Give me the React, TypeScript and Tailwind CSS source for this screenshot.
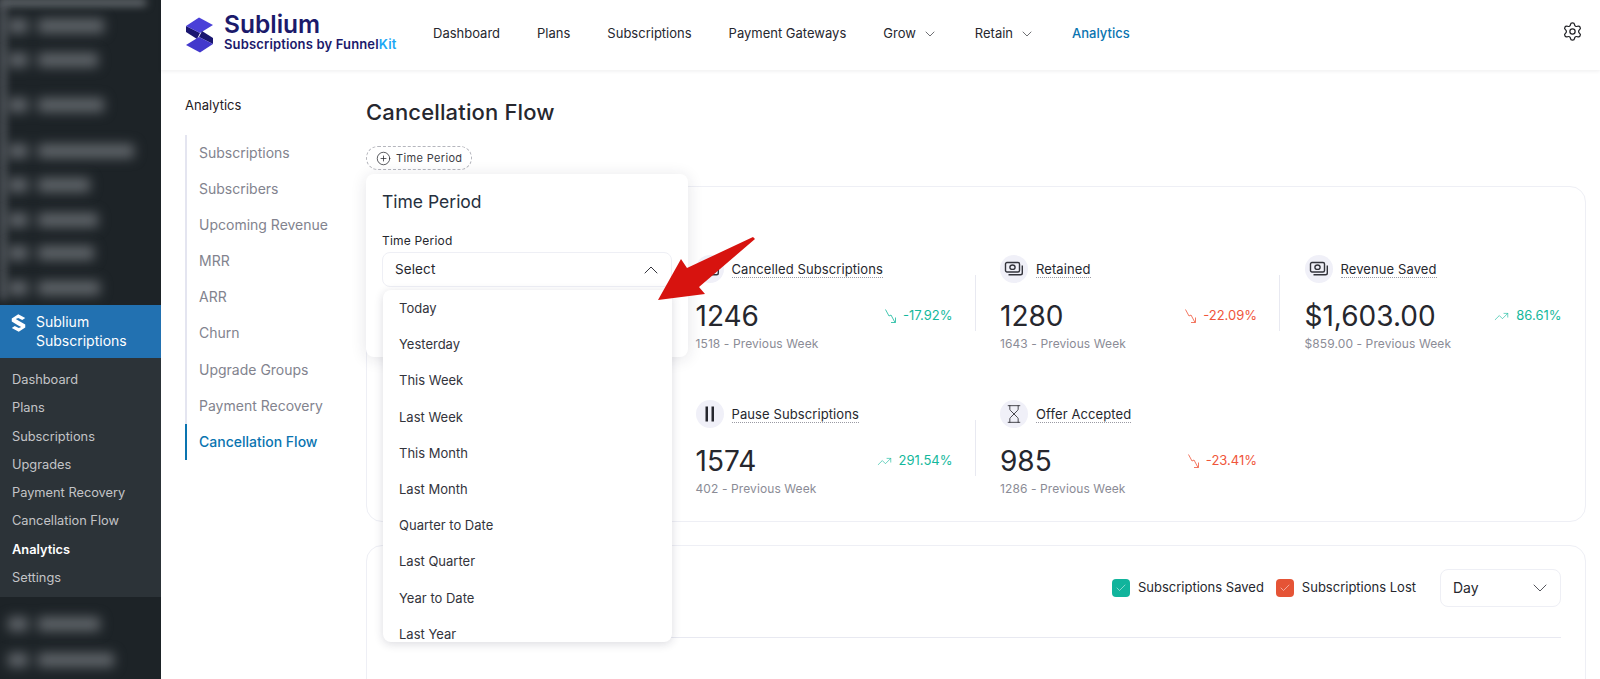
import { Check, ChevronDown, ChevronUp, CirclePlus, Hourglass, Settings, TrendingUp } from "lucide-react";

const font = "font-['Inter','Noto_Sans',sans-serif]";

const wpBlurred = [26, 60, 105, 151, 185, 220, 253, 288];
const wpSub = ["Dashboard", "Plans", "Subscriptions", "Upgrades", "Payment Recovery", "Cancellation Flow", "Analytics", "Settings"];
const navItems = ["Subscriptions", "Subscribers", "Upcoming Revenue", "MRR", "ARR", "Churn", "Upgrade Groups", "Payment Recovery"];
const periods = ["Today", "Yesterday", "This Week", "Last Week", "This Month", "Last Month", "Quarter to Date", "Last Quarter", "Year to Date", "Last Year"];

const CashIcon = () => (
  <svg width="20" height="16" viewBox="0 0 20 16" fill="none" stroke="#33343c" strokeWidth="1.4">
    <rect x="1.500" y="1.500" width="14" height="9.500" rx="1.500" />
    <ellipse cx="8.500" cy="6.200" rx="2.600" ry="2.200" />
    <path d="M18.300 4.500v7.500a1.800 1.800 0 0 1-1.800 1.800H4.500" />
  </svg>
);

const PauseIcon = () => (
  <svg width="12" height="16" viewBox="0 0 12 16" fill="#26272e">
    <rect x="1.500" y="0.500" width="2.500" height="15" />
    <rect x="7.500" y="0.500" width="2.500" height="15" />
  </svg>
);

const ZigDown = () => (
  <svg width="11" height="15" viewBox="0 0 11 15" fill="none" stroke="currentColor" strokeWidth="0.800">
    <path d="M0.500 0.500l3.500 6.500 2-1 4 7.500M10.500 8.500v5H6" />
  </svg>
);

const Logo = () => (
  <svg width="29" height="36" viewBox="0 0 29 36">
    <polygon points="1,9 15,16 12,22 1,15" fill="#1a1670" />
    <polygon points="14,0.500 28,8 15,16 1,9" fill="#4a40d8" />
    <polygon points="28,27 14,20 17,14 28,21" fill="#1a1670" />
    <polygon points="15,35.500 1,28 14,20 28,27" fill="#4238cc" />
  </svg>
);

const Stat = ({ icon, label, value, prev, change, down, good, divider = true }: { icon: React.ReactNode; label: string; value: string; prev: string; change: string; down?: boolean; good?: boolean; divider?: boolean }) => (
  <div className="flex">
    <div className="w-[257px]">
      <div className="flex items-center gap-2 h-7">
        <span className="w-7 h-7 rounded-full bg-[#f0f0f8] flex items-center justify-center">{icon}</span>
        <span className="text-[13px] leading-4 tracking-[0.1px] text-[#26272e] border-b border-dotted border-[#9a9aa3]">{label}</span>
      </div>
      <div className="flex items-center justify-between mt-[16px]">
        <span className="text-[28px] leading-[34px] text-[#26272e]">{value}</span>
        <span className={`flex items-center gap-[7px] text-[13px] ${good ? "text-[#14b89c]" : "text-[#f0553a]"}`}>
          {down ? <ZigDown /> : <TrendingUp size={15} strokeWidth={1} />}
          {change}
        </span>
      </div>
      <div className="text-xs leading-4 tracking-[0.1px] text-[#8b8c96] mt-[3px]">{prev}</div>
    </div>
    {divider && <div className="ml-[22px] mt-5 w-px h-14 bg-[#e8e9f1]" />}
  </div>
);

export default function App() {
  return (
    <div className={`${font} relative flex h-[679px] overflow-hidden bg-white`}>
      {/* WP sidebar */}
      <aside className="w-[161px] shrink-0 bg-[#1d2327] flex flex-col">
        <div className="relative h-[305px] shrink-0 overflow-hidden">
          <div className="absolute left-0 top-0 w-[146px] h-[5px] bg-[#8a8f94] blur-[4px]" />
          <div className="absolute left-0 top-0 w-[6px] h-[300px] bg-[#5c6166] blur-[4px]" />
          {wpBlurred.map((y, i) => (
            <div key={y} className="absolute flex items-center gap-2.5 left-2 blur-[6px]" style={{ top: y - 7 }}>
              <span className="w-5 h-3.5 bg-[#60656a]" />
              <span className="h-3.5 bg-[#60656a]" style={{ width: [66, 60, 66, 96, 52, 60, 56, 62][i] }} />
            </div>
          ))}
        </div>
        <div className="h-[53px] shrink-0 bg-[#2271b1] flex gap-[10px] pl-[11px] pt-[7px] text-[14px] leading-[19px] text-white">
          <svg width="15" height="18" viewBox="0 0 29 36" fill="white" className="mt-0.5 shrink-0">
            <polygon points="14,0.500 28,8 22,12 14,8 9,10 14,13 28,21 28,27 15,35.500 1,28 7,24 15,28 20,26 14,23 1,15 1,9" />
          </svg>
          <span>Sublium<br />Subscriptions</span>
        </div>
        <div className="bg-[#2c3338] h-[239px] shrink-0 pl-3 pt-2 text-[12.800px] text-[#c3c4c7]">
          {wpSub.map((s) => (
            <div key={s} className={`h-[28.3px] leading-[28.3px] ${s === "Analytics" ? "text-white font-semibold" : ""}`}>{s}</div>
          ))}
        </div>
        <div className="relative flex-1">
          {[624, 660].map((y, i) => (
            <div key={y} className="absolute flex items-center gap-2.5 left-2 blur-[6px]" style={{ top: y - 604 }}>
              <span className="w-5 h-3.5 bg-[#60656a]" />
              <span className="h-3.5 bg-[#60656a]" style={{ width: [62, 76][i] }} />
            </div>
          ))}
        </div>
      </aside>

      <div className="flex-1 min-w-0 flex flex-col">
        {/* top bar */}
        <header className="h-[70px] shrink-0 flex items-center pl-[24px] pr-[17px] bg-white shadow-[0_1px_4px_rgba(20,20,40,0.08)] relative z-10">
          <Logo />
          <div className="ml-[10px] w-[209px] mt-[-8px]">
            <div className="text-[24.500px] leading-[25px] font-semibold text-[#1b1a6b]">Sublium</div>
            <div className="text-[13px] leading-[14px] font-semibold text-[#1b1a6b] tracking-[0.15px]">
              Subscriptions by Funnel<span className="text-[#1aa7f5]">Kit</span>
            </div>
          </div>
          <nav className="flex items-center gap-[37px] mt-[-3px] text-[13px] text-[#26272e]">
            <span>Dashboard</span>
            <span>Plans</span>
            <span>Subscriptions</span>
            <span>Payment Gateways</span>
            <span className="flex items-center gap-[6px]">Grow <ChevronDown size={16} strokeWidth={1} /></span>
            <span className="flex items-center gap-[6px]">Retain <ChevronDown size={16} strokeWidth={1} /></span>
            <span className="text-[#0a74b0] font-medium">Analytics</span>
          </nav>
          <Settings size={21} strokeWidth={1.4} className="ml-auto mt-[-8px] text-[#1f2024]" />
        </header>

        <div className="flex-1 flex min-h-0">
          {/* analytics sub nav */}
          <div className="w-[205px] shrink-0 pl-6 pt-[27px]">
            <div className="text-[13px] leading-4 text-[#1f2024]">Analytics</div>
            <div className="mt-[22px] border-l-2 border-[#e4e5f0]">
              {navItems.map((n) => (
                <div key={n} className="h-[36.1px] leading-[36.1px] pl-3 text-sm text-[#82838e]">{n}</div>
              ))}
              <div className="h-[36.1px] leading-[36.1px] pl-3 text-sm text-[#0a74b0] font-medium border-l-2 border-[#0a74b0] -ml-0.5">Cancellation Flow</div>
            </div>
          </div>

          {/* main */}
          <main className="relative flex-1 min-w-0 pr-[14px] pt-[29px]">
            <h1 className="text-[22px] leading-[26px] tracking-[0.15px] font-medium text-[#26272e]">Cancellation Flow</h1>
            <div className="mt-[21px] w-[106px] h-6 flex items-center gap-[5px] pl-[9px] rounded-full border border-dashed border-[#b5b6bd] text-[11px] tracking-[0.35px] text-[#3c3d45]">
              <CirclePlus size={15} strokeWidth={1.2} className="text-[#26272e]" />
              Time Period
            </div>

            {/* stats card */}
            <section className="mt-[16px] h-[336px] rounded-2xl border border-[#eeeff5] pl-[24px] pt-[68px]">
              <div className="grid grid-cols-[304.5px_304.5px_304.5px_257px] gap-y-[48px]">
                <div className="h-24" />
                <Stat icon={<CashIcon />} label="Cancelled Subscriptions" value="1246" prev="1518 - Previous Week" change="-17.92%" down good />
                <Stat icon={<CashIcon />} label="Retained" value="1280" prev="1643 - Previous Week" change="-22.09%" down />
                <Stat icon={<CashIcon />} label="Revenue Saved" value="$1,603.00" prev="$859.00 - Previous Week" change="86.61%" good divider={false} />
                <div className="h-24" />
                <Stat icon={<PauseIcon />} label="Pause Subscriptions" value="1574" prev="402 - Previous Week" change="291.54%" good />
                <Stat icon={<Hourglass size={20} strokeWidth={1} className="text-[#26272e]" />} label="Offer Accepted" value="985" prev="1286 - Previous Week" change="-23.41%" down divider={false} />
              </div>
            </section>

            {/* chart card */}
            <section className="mt-[23px] h-[200px] rounded-2xl border border-[#eeeff5] pl-[24px] pr-[24px] pt-[23px]">
              <div className="flex items-center justify-end gap-6 h-[38px]">
                <div className="flex items-center gap-2 text-[13px] text-[#26272e]">
                  <span className="w-[18px] h-[18px] rounded-[4px] bg-[#11b49c] flex items-center justify-center"><Check size={12} strokeWidth={1} className="text-white" /></span>
                  Subscriptions Saved
                  <span className="ml-[4px] w-[18px] h-[18px] rounded-[4px] bg-[#e55436] flex items-center justify-center"><Check size={12} strokeWidth={1} className="text-white" /></span>
                  Subscriptions Lost
                </div>
                <div className="w-[121px] h-[38px] flex items-center justify-between pl-3 pr-2 rounded-lg border border-[#eeeff5] text-sm text-[#26272e]">
                  Day <ChevronDown size={24} strokeWidth={1} className="text-[#55565e]" />
                </div>
              </div>
              <div className="mt-[30px] h-px bg-[#e8e9f1]" />
            </section>

            {/* time period popover */}
            <div className="absolute left-0 top-[104px] w-[322px] h-[183px] rounded-lg bg-white shadow-[0_2px_16px_rgba(30,30,60,0.12)] px-4 pt-4">
              <div className="text-[17.500px] leading-6 text-[#26303e]">Time Period</div>
              <div className="mt-[19px] text-xs leading-4 tracking-[0.2px] text-[#26272e]">Time Period</div>
              <div className="mt-[3px] w-[290px] h-[35px] flex items-center justify-between pl-3 pr-2 rounded-lg border border-[#eeeff5] text-[13.500px] tracking-[0.1px] text-[#26272e]">
                Select <ChevronUp size={24} strokeWidth={1} className="text-[#33343c]" />
              </div>
            </div>

            {/* dropdown options */}
            <div className="absolute left-[17px] top-[220px] w-[289px] h-[352px] rounded-lg bg-white shadow-[0_2px_10px_rgba(30,30,60,0.16)] overflow-hidden">
              {periods.map((p) => (
                <div key={p} className="h-[36.2px] leading-[36.2px] pl-4 text-[13px] text-[#33343c]">{p}</div>
              ))}
            </div>
          </main>
        </div>
      </div>

      {/* red annotation arrow */}
      <svg className="absolute left-0 top-0 pointer-events-none" width="1600" height="679">
        <polygon points="658,300 681,259 687,268 753,237 755,239 699,287 705,294" fill="#d7130f" />
      </svg>
    </div>
  );
}
